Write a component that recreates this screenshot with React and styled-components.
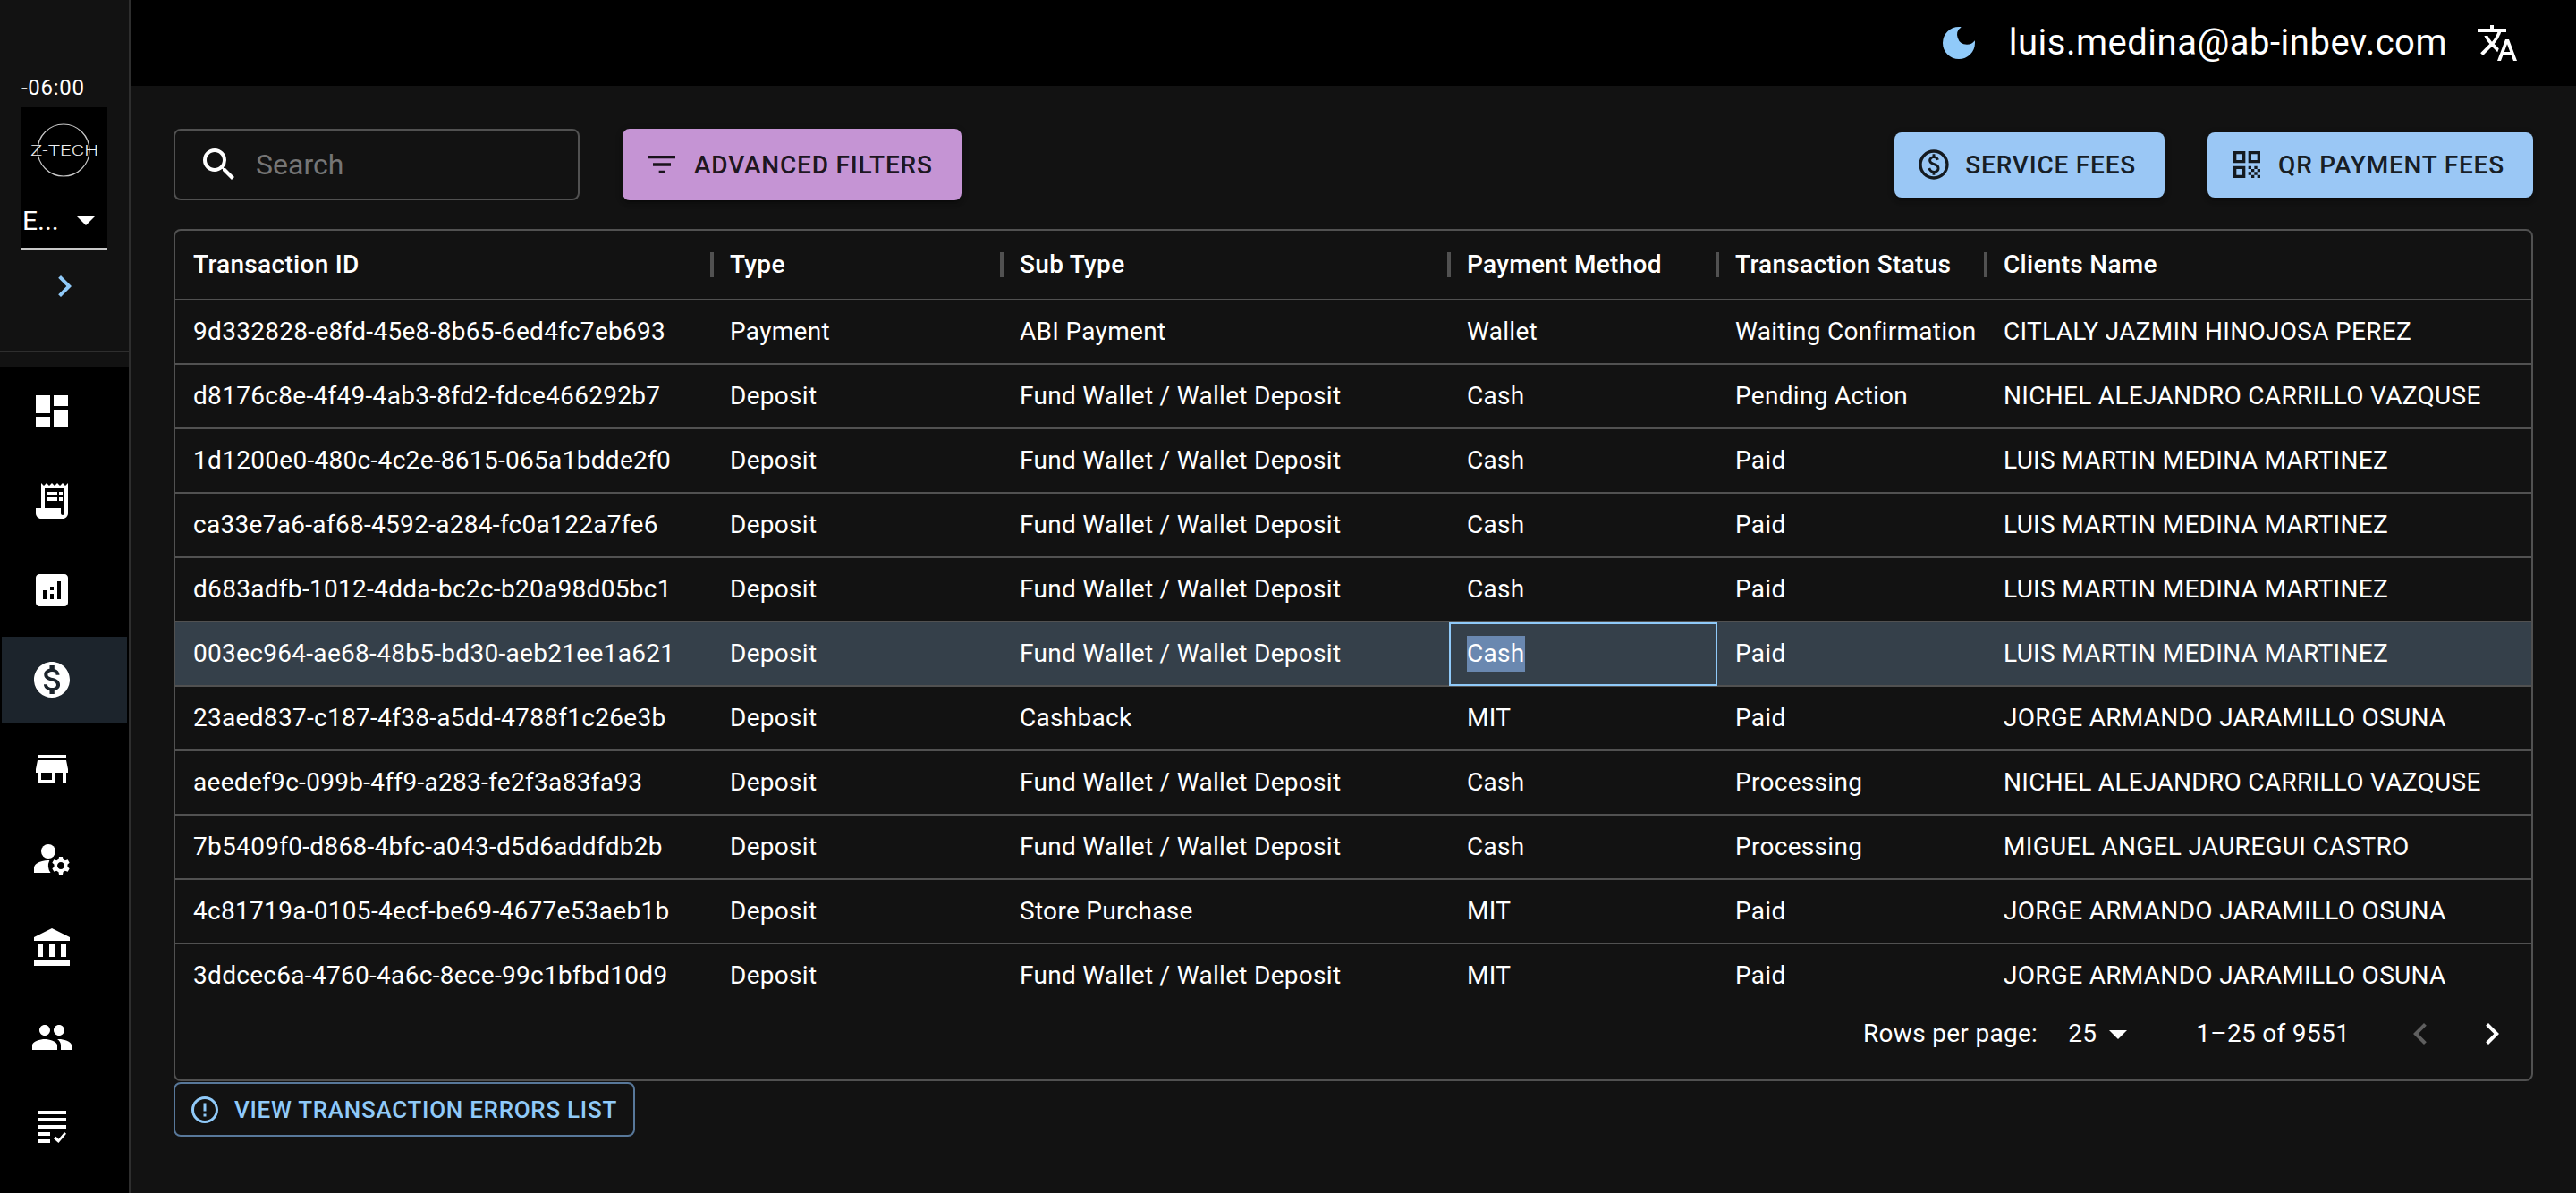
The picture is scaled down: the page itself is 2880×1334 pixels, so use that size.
import React from 'react'
import styled, { createGlobalStyle } from 'styled-components'
import {
  MdDashboard, MdReceiptLong, MdAnalytics, MdMonetizationOn, MdStore, MdManageAccounts,
  MdAccountBalance, MdPeople, MdOutlinePaid, MdOutlineQrCode, MdFilterList, MdSearch,
  MdDarkMode, MdTranslate, MdErrorOutline, MdChevronRight, MdChevronLeft, MdArrowDropDown,
} from 'react-icons/md'

const GlobalStyle = createGlobalStyle`
  html, body { margin: 0; padding: 0; background: #121212; }
  body { font-family: Roboto, "Liberation Sans", sans-serif; color: #fff; }
  * { box-sizing: border-box; }
`

const rows = [
  ['9d332828-e8fd-45e8-8b65-6ed4fc7eb693', 'Payment', 'ABI Payment', 'Wallet', 'Waiting Confirmation', 'CITLALY JAZMIN HINOJOSA PEREZ'],
  ['d8176c8e-4f49-4ab3-8fd2-fdce466292b7', 'Deposit', 'Fund Wallet / Wallet Deposit', 'Cash', 'Pending Action', 'NICHEL ALEJANDRO CARRILLO VAZQUSE'],
  ['1d1200e0-480c-4c2e-8615-065a1bdde2f0', 'Deposit', 'Fund Wallet / Wallet Deposit', 'Cash', 'Paid', 'LUIS MARTIN MEDINA MARTINEZ'],
  ['ca33e7a6-af68-4592-a284-fc0a122a7fe6', 'Deposit', 'Fund Wallet / Wallet Deposit', 'Cash', 'Paid', 'LUIS MARTIN MEDINA MARTINEZ'],
  ['d683adfb-1012-4dda-bc2c-b20a98d05bc1', 'Deposit', 'Fund Wallet / Wallet Deposit', 'Cash', 'Paid', 'LUIS MARTIN MEDINA MARTINEZ'],
  ['003ec964-ae68-48b5-bd30-aeb21ee1a621', 'Deposit', 'Fund Wallet / Wallet Deposit', 'Cash', 'Paid', 'LUIS MARTIN MEDINA MARTINEZ'],
  ['23aed837-c187-4f38-a5dd-4788f1c26e3b', 'Deposit', 'Cashback', 'MIT', 'Paid', 'JORGE ARMANDO JARAMILLO OSUNA'],
  ['aeedef9c-099b-4ff9-a283-fe2f3a83fa93', 'Deposit', 'Fund Wallet / Wallet Deposit', 'Cash', 'Processing', 'NICHEL ALEJANDRO CARRILLO VAZQUSE'],
  ['7b5409f0-d868-4bfc-a043-d5d6addfdb2b', 'Deposit', 'Fund Wallet / Wallet Deposit', 'Cash', 'Processing', 'MIGUEL ANGEL JAUREGUI CASTRO'],
  ['4c81719a-0105-4ecf-be69-4677e53aeb1b', 'Deposit', 'Store Purchase', 'MIT', 'Paid', 'JORGE ARMANDO JARAMILLO OSUNA'],
  ['3ddcec6a-4760-4a6c-8ece-99c1bfbd10d9', 'Deposit', 'Fund Wallet / Wallet Deposit', 'MIT', 'Paid', 'JORGE ARMANDO JARAMILLO OSUNA'],
]

const headers = ['Transaction ID', 'Type', 'Sub Type', 'Payment Method', 'Transaction Status', 'Clients Name']

const TasksIcon = () => (
  <svg width="48" height="48" viewBox="0 0 24 24" fill="currentColor">
    <rect x="4" y="3" width="16" height="2" />
    <rect x="4" y="7" width="16" height="2" />
    <rect x="4" y="11" width="16" height="2" />
    <rect x="4" y="15" width="7" height="2" />
    <rect x="4" y="19" width="7" height="2" />
    <path d="M13 18.6l1.3-1.2 1.4 1.5 3.3-3.9 1 .9-4.3 5.1z" />
  </svg>
)

const ZTechLogo = () => (
  <svg width="96" height="95" viewBox="0 0 96 95">
    <circle cx="47" cy="48" r="29" fill="none" stroke="#c9c9c9" strokeWidth="1.2" />
    <text x="10" y="54" textLength="76" lengthAdjust="spacingAndGlyphs" fontFamily="Roboto, sans-serif" fontWeight="300" fontSize="17" fill="#f0f0f0">Z-TECH</text>
  </svg>
)

const navIcons = [
  [MdDashboard], [MdReceiptLong], [MdAnalytics], [MdMonetizationOn, true], [MdStore],
  [MdManageAccounts], [MdAccountBalance], [MdPeople], [TasksIcon],
]

export default function App() {
  return (
    <Page>
      <GlobalStyle />
      <Sidebar>
        <SideTop>
          <Offset>-06:00</Offset>
          <LogoBox><ZTechLogo /></LogoBox>
          <CompanySelect>
            <span>E...</span>
            <MdArrowDropDown size={48} />
          </CompanySelect>
          <Expand><MdChevronRight size={48} /></Expand>
        </SideTop>
        <Nav>
          {navIcons.map(([Icon, active], i) => (
            <NavItem key={i} $active={active}><Icon size={48} /></NavItem>
          ))}
        </Nav>
      </Sidebar>
      <Main>
        <TopBar>
          <MoonIcon><MdDarkMode size={48} /></MoonIcon>
          <Email>luis.medina@ab-inbev.com</Email>
          <MdTranslate size={48} />
        </TopBar>
        <Content>
          <Toolbar>
            <SearchBox>
              <MdSearch size={48} />
              <Placeholder>Search</Placeholder>
            </SearchBox>
            <FilterButton><MdFilterList size={40} />Advanced Filters</FilterButton>
            <Spacer />
            <FeeButton><MdOutlinePaid size={40} />Service Fees</FeeButton>
            <FeeButton><MdOutlineQrCode size={40} />QR Payment Fees</FeeButton>
          </Toolbar>
          <Grid>
            <HeaderRow>
              {headers.map((h, i) => (
                <HeaderCell key={h} $sep={i < headers.length - 1}>{h}</HeaderCell>
              ))}
            </HeaderRow>
            <Body>
              {rows.map((r, i) => (
                <Row key={r[0]} $selected={i === 5}>
                  {r.map((c, j) => (
                    i === 5 && j === 3
                      ? <Cell key={j} $focused><Selected>{c}</Selected></Cell>
                      : <Cell key={j}>{c}</Cell>
                  ))}
                </Row>
              ))}
            </Body>
            <Footer>
              <RowsLabel>Rows per page:</RowsLabel>
              <PageSize>25<MdArrowDropDown size={48} /></PageSize>
              <Range>1–25 of 9551</Range>
              <PagerIcon $disabled><MdChevronLeft size={48} /></PagerIcon>
              <PagerIcon><MdChevronRight size={48} /></PagerIcon>
            </Footer>
          </Grid>
          <ErrorsButton><MdErrorOutline size={36} />View Transaction Errors List</ErrorsButton>
        </Content>
      </Main>
    </Page>
  )
}

const Page = styled.div`
  display: flex;
  width: 2880px;
  height: 1334px;
  overflow: hidden;
  background: #121212;
`
const Sidebar = styled.aside`
  width: 146px;
  flex: none;
  display: flex;
  flex-direction: column;
  border-right: 2px solid #2e2e2e;
  background: #121212;
`
const SideTop = styled.div`
  height: 394px;
  flex: none;
  padding: 84px 24px 0;
  border-bottom: 2px solid #2e2e2e;
`
const Offset = styled.div`
  font-size: 24px;
  line-height: 28px;
  height: 36px;
  letter-spacing: 0.7px;
  color: #fff;
`
const LogoBox = styled.div`
  width: 96px;
  height: 95px;
  background: #000;
`
const CompanySelect = styled.div`
  width: 96px;
  height: 64px;
  background: #000;
  border-bottom: 2px solid #c8c8c8;
  display: flex;
  align-items: center;
  justify-content: space-between;
  font-size: 30px;
  color: #fff;
  padding-left: 1px;
`
const Expand = styled.div`
  display: flex;
  justify-content: center;
  margin-top: 17px;
  color: #90caf9;
`
const Nav = styled.nav`
  margin-top: 16px;
  flex: 1;
  background: #000;
  padding: 2px 2px 0;
  display: flex;
  flex-direction: column;
  gap: 4px;
`
const NavItem = styled.div`
  height: 96px;
  flex: none;
  display: flex;
  align-items: center;
  padding-left: 32px;
  color: #fff;
  background: ${(p) => (p.$active ? '#1c242c' : 'transparent')};
`
const Main = styled.main`
  flex: 1;
  min-width: 0;
  display: flex;
  flex-direction: column;
`
const TopBar = styled.header`
  height: 96px;
  flex: none;
  background: #000;
  display: flex;
  align-items: center;
  justify-content: flex-end;
  padding-right: 64px;
  color: #fff;
`
const MoonIcon = styled.div`
  display: flex;
  color: #90caf9;
  margin-right: 32px;
`
const Email = styled.div`
  font-size: 40px;
  line-height: 48px;
  letter-spacing: 0.5px;
  margin-right: 32px;
`
const Content = styled.div`
  flex: 1;
  padding: 48px 48px 0;
`
const Toolbar = styled.div`
  display: flex;
  align-items: center;
  height: 80px;
  margin-bottom: 32px;
`
const SearchBox = styled.div`
  width: 454px;
  height: 80px;
  border: 2px solid #515151;
  border-radius: 8px;
  display: flex;
  align-items: center;
  padding-left: 25px;
  gap: 17px;
  color: #fff;
`
const Placeholder = styled.span`
  font-size: 32px;
  color: #757575;
`
const Button = styled.div`
  display: flex;
  align-items: center;
  padding: 0 32px 0 24px;
  border-radius: 8px;
  font-size: 28px;
  font-weight: 500;
  letter-spacing: 0.8px;
  text-transform: uppercase;
  color: rgba(0, 0, 0, 0.87);
  box-shadow: 0 6px 2px -4px rgba(0,0,0,.2), 0 4px 4px 0 rgba(0,0,0,.14), 0 2px 10px 0 rgba(0,0,0,.12);
`
const FilterButton = styled(Button)`
  height: 80px;
  gap: 16px;
  margin-left: 48px;
  background: #c594d4;
`
const FeeButton = styled(Button)`
  height: 73px;
  gap: 15px;
  margin-left: 48px;
  background: #9ac7f5;
`
const Spacer = styled.div`
  flex: 1;
`
const Grid = styled.section`
  border: 2px solid #515151;
  border-radius: 8px;
  height: 953px;
  display: flex;
  flex-direction: column;
  overflow: hidden;
`
const columns = '600px 324px 500px 300px 300px 1fr'
const HeaderRow = styled.div`
  display: grid;
  grid-template-columns: ${columns};
  height: 78px;
  flex: none;
  border-bottom: 2px solid #515151;
`
const HeaderCell = styled.div`
  display: flex;
  align-items: center;
  padding: 0 0 2px 20px;
  font-size: 28px;
  font-weight: 500;
  letter-spacing: 0.3px;
  position: relative;
  &::after {
    content: '';
    display: ${(p) => (p.$sep ? 'block' : 'none')};
    position: absolute;
    right: -2px;
    top: 24px;
    width: 4px;
    height: 28px;
    background: #515151;
  }
`
const Body = styled.div`
  height: 790px;
  flex: none;
  overflow: hidden;
`
const Row = styled.div`
  display: grid;
  grid-template-columns: ${columns};
  height: 72px;
  border-bottom: 2px solid #515151;
  background: ${(p) => (p.$selected ? '#35404a' : 'transparent')};
`
const Cell = styled.div`
  display: flex;
  align-items: center;
  padding: 0 0 2px 20px;
  font-size: 28px;
  letter-spacing: 0.3px;
  white-space: nowrap;
  overflow: hidden;
  ${(p) => p.$focused && 'outline: 2px solid #90caf9; outline-offset: -2px; height: 71px;'}
`
const Selected = styled.span`
  display: inline-flex;
  align-items: center;
  height: 40px;
  background: #6a88b0;
`
const Footer = styled.div`
  flex: 1;
  display: flex;
  align-items: center;
  padding-bottom: 22px;
  font-size: 28px;
  letter-spacing: 0.3px;
`
const RowsLabel = styled.span`
  margin-left: auto;
`
const PageSize = styled.span`
  display: flex;
  align-items: center;
  margin-left: 34px;
`
const Range = styled.span`
  margin-left: 63px;
`
const PagerIcon = styled.span`
  display: flex;
  margin-left: ${(p) => (p.$disabled ? '55px' : '32px')};
  margin-right: ${(p) => (p.$disabled ? '0' : '20px')};
  color: ${(p) => (p.$disabled ? '#5f5f5f' : '#fff')};
`
const ErrorsButton = styled.div`
  display: inline-flex;
  align-items: center;
  gap: 15px;
  margin-top: 1px;
  height: 61px;
  padding: 0 18px 0 15px;
  border: 2px solid #58789a;
  border-radius: 8px;
  font-size: 26px;
  font-weight: 500;
  letter-spacing: 0.72px;
  text-transform: uppercase;
  color: #90caf9;
`
